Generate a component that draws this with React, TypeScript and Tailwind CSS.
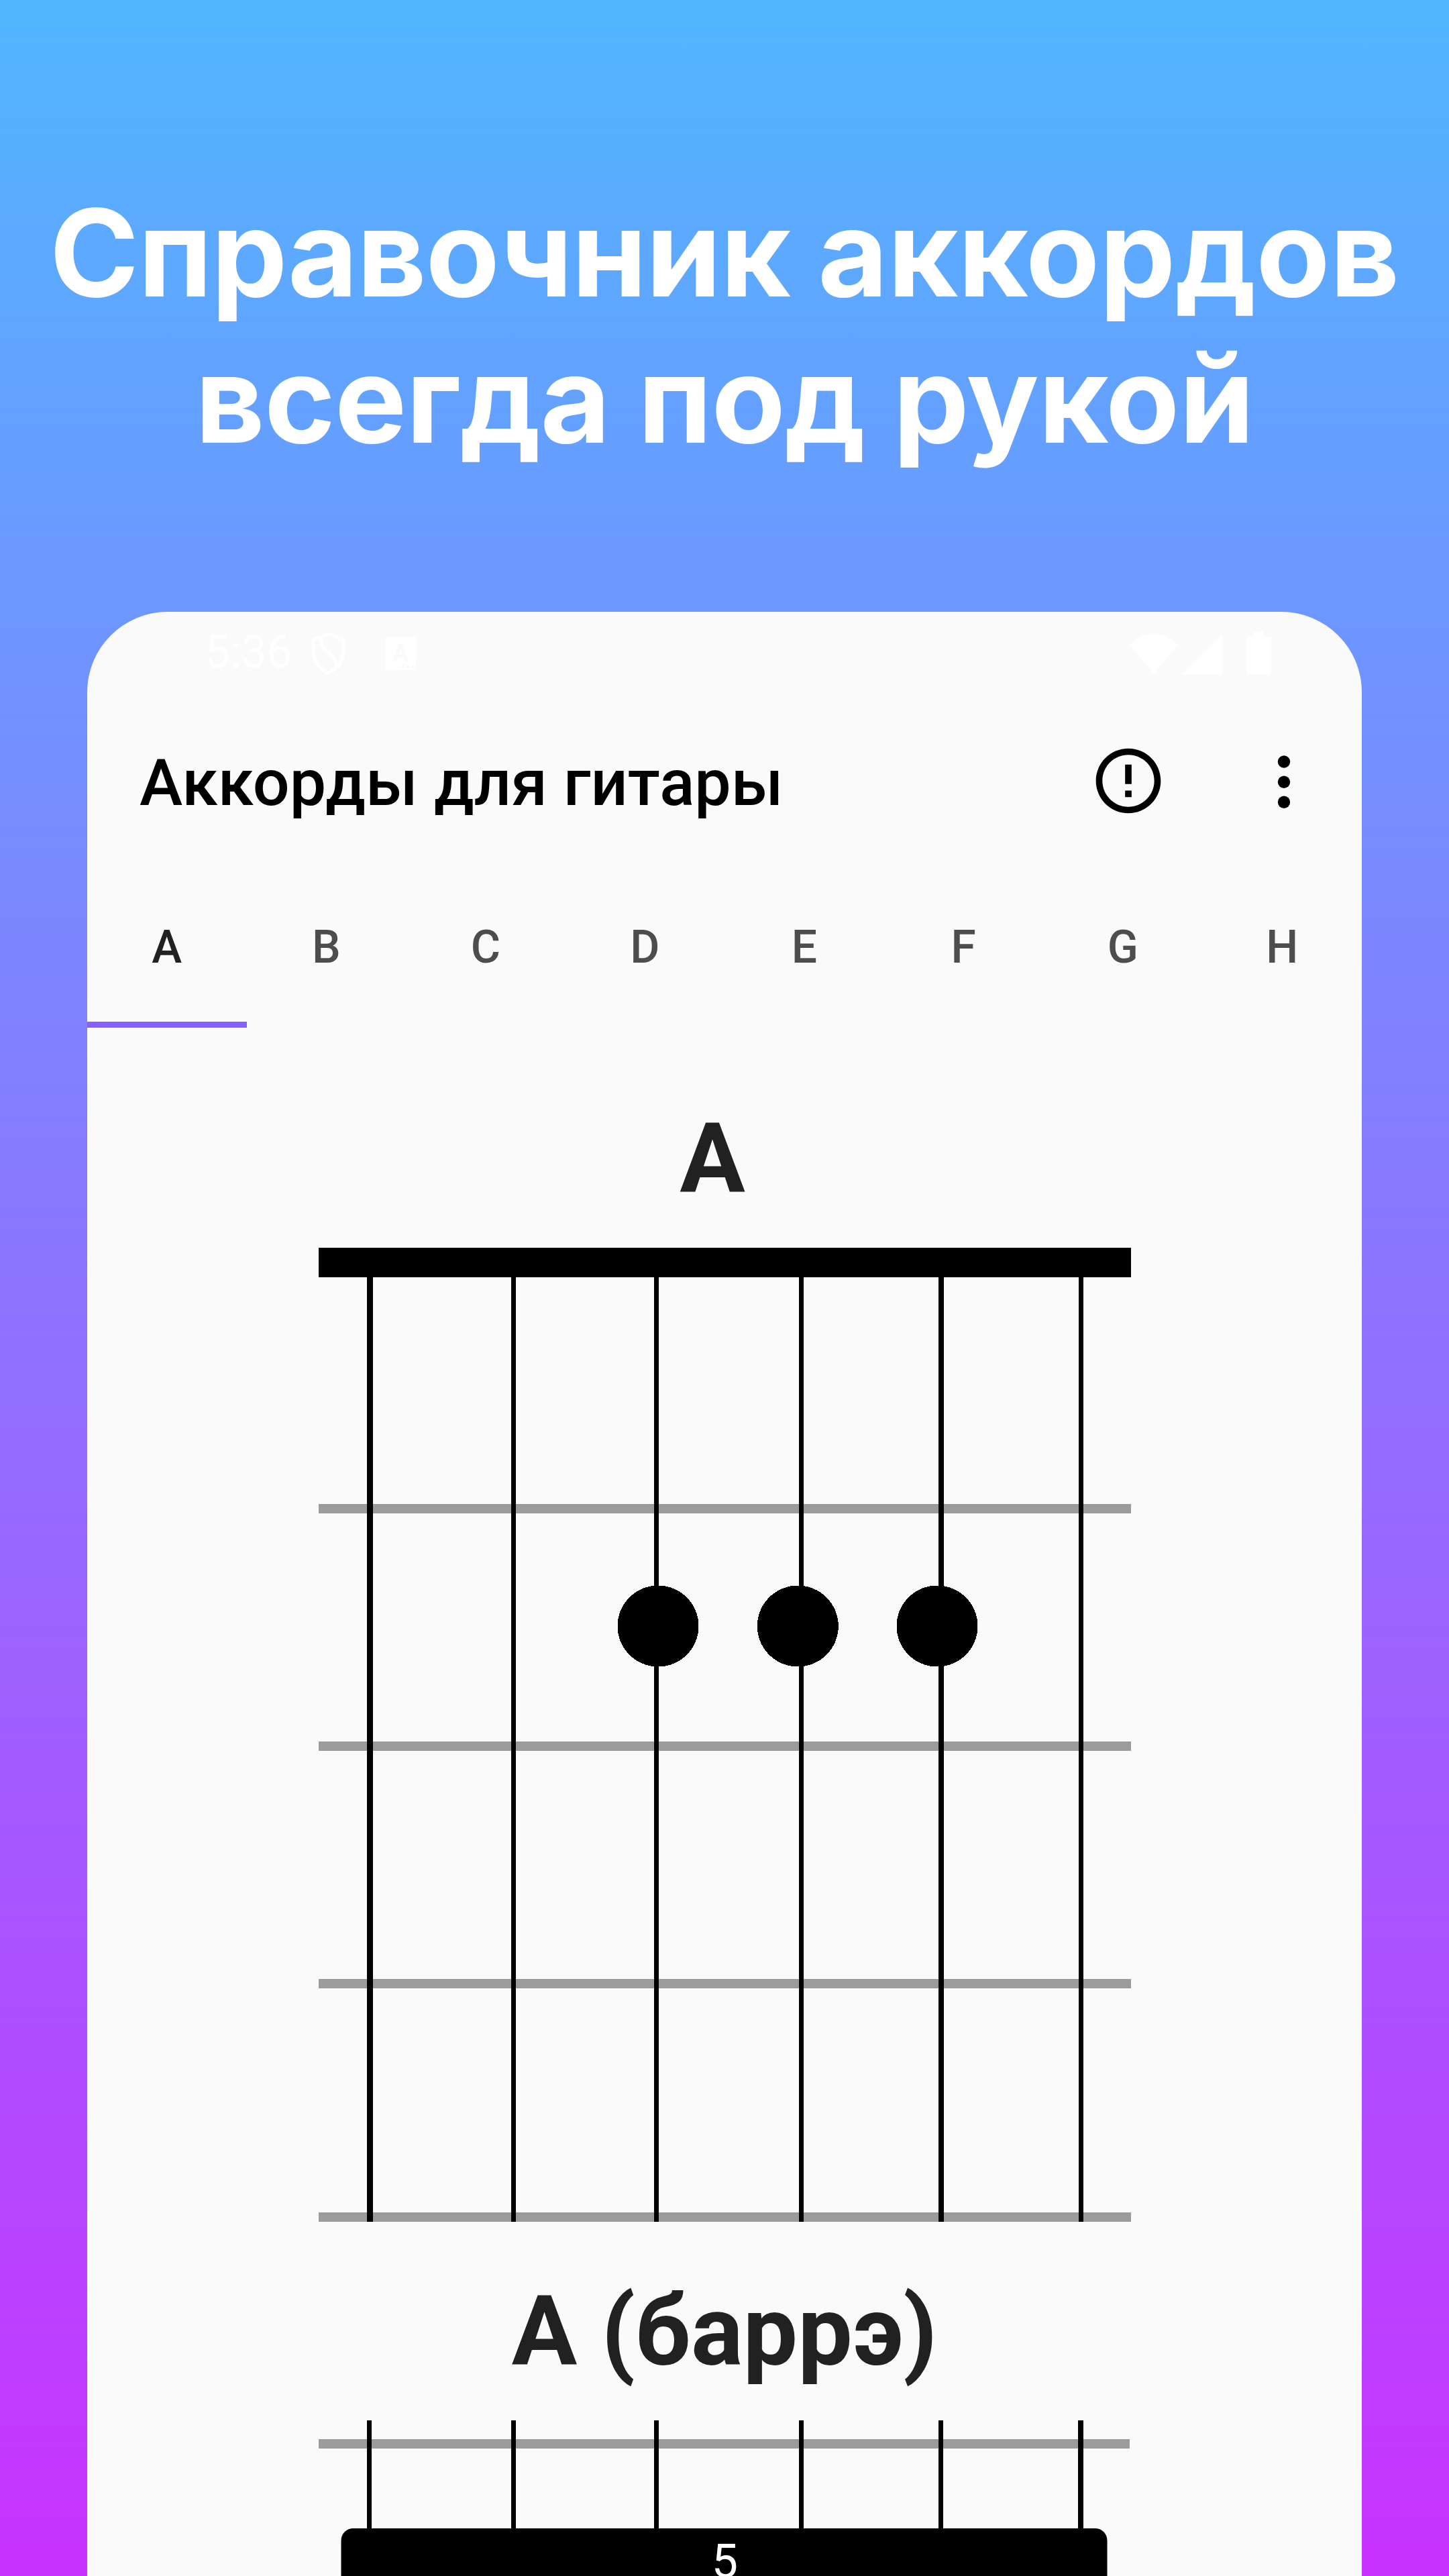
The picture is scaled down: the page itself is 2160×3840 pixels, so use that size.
const NOTES = ["A", "B", "C", "D", "E", "F", "G", "H"];

function ShieldIcon() {
  return (
    <svg className="ml-[31px] h-[65px] w-[51px]" viewBox="0 0 51 65" fill="none" stroke="#ffffff" strokeWidth="5">
      <path d="M25.5 3 3 11.5v17C3 43 12 55 25.5 61.5 39 55 48 43 48 28.5v-17L25.5 3Z" strokeLinejoin="round" />
      <path d="M15 8C11 31 38 30 37 52" />
    </svg>
  );
}

function KeyboardIcon() {
  return (
    <div className="relative ml-[59px] mt-[7px] flex h-[50px] w-[46px] items-center justify-center rounded-[4px] bg-white text-[36px] font-bold leading-none text-[#fafafa]">
      A
      <span className="absolute bottom-[4px] right-[3px] flex gap-[3px]">
        <i className="size-[4px] bg-[#fafafa]" />
        <i className="size-[4px] bg-[#fafafa]" />
        <i className="size-[4px] bg-[#fafafa]" />
      </span>
    </div>
  );
}

function StatusBar() {
  return (
    <div className="flex h-[150px] items-start pl-[175px] pt-[30px] text-white">
      <span className="w-[128px] whitespace-nowrap text-[67.7px] leading-[60px]">5:36</span>
      <ShieldIcon />
      <KeyboardIcon />
      <svg className="ml-auto mr-[135px] h-[65px] w-[212px]" viewBox="1683 940 212 65" fill="#ffffff">
        <path d="M1683.7 958.7Q1720 926.7 1756 958.7L1720 1003Z" />
        <path d="M1822.7 943V1003H1763Z" />
        <path d="M1868.7 940h15v7h8q3.3 0 3.3 3.3v49.4q0 3.3-3.3 3.3h-30.4q-3.3 0-3.3-3.3v-49.4q0-3.3 3.3-3.3h7.4z" />
      </svg>
    </div>
  );
}

function AppBar() {
  return (
    <header className="flex h-[205px] items-center pl-[78px] pr-[58px] text-black">
      <h2 className="pt-[6px] text-[96.8px] font-medium leading-none">Аккорды для гитары</h2>
      <svg className="mb-[2px] ml-auto size-[116px]" viewBox="0 0 24 24">
        <path d="M11 15h2v2h-2zm0-8h2v6h-2zm.99-5C6.47 2 2 6.48 2 12s4.47 10 9.99 10C17.52 22 22 17.52 22 12S17.52 2 11.99 2zM12 20c-4.42 0-8-3.58-8-8s3.58-8 8-8 8 3.58 8 8-3.58 8-8 8z" />
      </svg>
      <svg className="mb-[1px] ml-[115px] size-[117px]" viewBox="0 0 117 117">
        <circle cx="59" cy="29.5" r="9.2" />
        <circle cx="59" cy="59.7" r="9.2" />
        <circle cx="59" cy="89.8" r="9.2" />
      </svg>
    </header>
  );
}

function Tabs() {
  return (
    <nav className="grid h-[265px] grid-cols-8">
      {NOTES.map((note, i) => (
        <div
          key={note}
          className={
            i === 0
              ? "flex flex-col items-center justify-between text-[#212121]"
              : "flex flex-col items-center text-[#4d4d4d]"
          }
        >
          <span className="pt-[104px] text-[67.7px] font-medium leading-[82px]">{note}</span>
          {i === 0 && <span className="h-[9.5px] w-full bg-[#865fff]" />}
        </div>
      ))}
    </nav>
  );
}

function OpenChord() {
  return (
    <svg className="block h-[1452px] w-[1211px]" viewBox="475 1860 1211 1452" shapeRendering="crispEdges">
      <g fill="#9b9b9b">
        <rect x="475" y="2242" width="1211" height="14" />
        <rect x="475" y="2596" width="1211" height="14" />
        <rect x="475" y="2950" width="1211" height="14" />
        <rect x="475" y="3298" width="1211" height="14" />
      </g>
      <rect x="475" y="1860" width="1211" height="44" />
      <rect x="547" y="1900" width="9" height="1412" />
      <rect x="762" y="1900" width="7" height="1412" />
      <rect x="975" y="1900" width="7" height="1412" />
      <rect x="1191" y="1900" width="7" height="1412" />
      <rect x="1399" y="1900" width="8" height="1412" />
      <rect x="1608" y="1900" width="7" height="1412" />
      <circle cx="981" cy="2424" r="60.5" />
      <circle cx="1189.3" cy="2424" r="60.5" />
      <circle cx="1397" cy="2424" r="60.5" />
    </svg>
  );
}

function BarreChord() {
  return (
    <svg className="block h-[232px] w-[1211px]" viewBox="475 3608 1211 232">
      <rect x="475" y="3636" width="1209" height="14" fill="#9b9b9b" />
      <rect x="547" y="3608" width="7" height="180" />
      <rect x="762" y="3608" width="7" height="180" />
      <rect x="975" y="3608" width="7" height="180" />
      <rect x="1191" y="3608" width="7" height="180" />
      <rect x="1399" y="3608" width="7" height="180" />
      <rect x="1607" y="3608" width="8" height="180" />
      <rect x="508.5" y="3769" width="1142" height="140" rx="18" />
      <text x="1080.5" y="3842" textAnchor="middle" fontSize="70" fill="#ffffff">5</text>
    </svg>
  );
}

export default function App() {
  return (
    <main className="flex h-[3840px] w-[2160px] flex-col items-center overflow-hidden bg-[linear-gradient(180deg,#51b6ff_0%,#c832ff_100%)] font-[Roboto,sans-serif]">
      <h1 className="h-[912px] whitespace-nowrap pt-[268px] text-center font-[Inter,sans-serif] text-[180px] font-bold leading-[218px] tracking-[-0.85px] text-white">
        <span className="tracking-[-1.3px]">Справочник</span> <span className="tracking-[-0.25px]">аккордов</span>
        <br />
        всегда под рукой
      </h1>
      <section className="flex h-[2928px] w-[1900px] shrink-0 flex-col overflow-hidden rounded-t-[120px] bg-[#fafafa]">
        <StatusBar />
        <AppBar />
        <Tabs />
        <div className="flex flex-col items-center text-[145.2px] font-bold text-[#212121]">
          <h3 className="h-[328px] whitespace-pre pt-[108px] leading-[174px]">{"A "}</h3>
          <div className="text-black"><OpenChord /></div>
          <h3 className="h-[296px] pt-[76px] leading-[174px]">A (баррэ)</h3>
          <div className="font-normal"><BarreChord /></div>
        </div>
      </section>
    </main>
  );
}
